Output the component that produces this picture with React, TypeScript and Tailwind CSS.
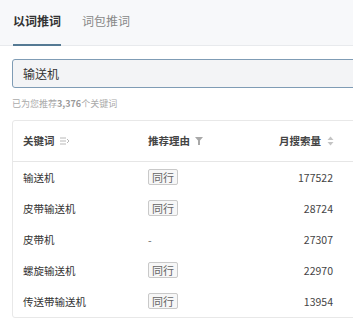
import { FC } from "react";

const rows: { word: string; reason: string | null; volume: number }[] = [
  { word: "输送机", reason: "同行", volume: 177522 },
  { word: "皮带输送机", reason: "同行", volume: 28724 },
  { word: "皮带机", reason: null, volume: 27307 },
  { word: "螺旋输送机", reason: "同行", volume: 22970 },
  { word: "传送带输送机", reason: "同行", volume: 13954 },
];

const ListIcon: FC = () => (
  <svg width="10" height="8" viewBox="0 0 10 8" className="ml-[5px]">
    <path d="M0 1h6M0 4h6M0 7h6" stroke="#b8b8b8" strokeWidth="1" fill="none" />
    <path d="M7 2l2 2-2 2" stroke="#b8b8b8" strokeWidth="1" fill="none" />
  </svg>
);

const FilterIcon: FC = () => (
  <svg width="8" height="8" viewBox="0 0 8 8" className="ml-[5px]">
    <path d="M0 0h8L5 3.5V8H3V3.5z" fill="#a8a8a8" />
  </svg>
);

const SortIcon: FC = () => (
  <svg width="7" height="10" viewBox="0 0 7 10" className="ml-[6px]">
    <path d="M3.5 0.5L6.5 4H0.5z" fill="#c4c4c4" />
    <path d="M3.5 9.5L6.5 6H0.5z" fill="#c4c4c4" />
  </svg>
);

export default function App() {
  return (
    <div
      className="w-[353px] h-[322px] overflow-hidden bg-white text-[#333]"
      style={{ fontFamily: '"Noto Sans CJK SC", "Liberation Sans", sans-serif' }}
    >
      <div className="w-[400px]">
        <div className="bg-[#f7f8fa] border-b border-[#e8eaed] flex gap-[21px] pl-[13px] h-[46px]">
          <div className="relative pt-[12px] text-[12px] font-bold text-[#333]">
            以词推词
            <div className="absolute left-0 right-0 bottom-[-1px] h-[2px] bg-[#557a94]" />
          </div>
          <div className="pt-[12px] text-[12px] text-[#888]">词包推词</div>
        </div>

        <div className="pl-[12px] pt-[13px]">
          <div className="h-[29px] border border-[#7f9cb5] rounded-[3px] bg-[#f3f4f6] flex items-center pl-[10px] text-[12px] text-[#333]">
            输送机
          </div>
          <div className="mt-[8px] h-[15px] leading-[15px] text-[9px] text-[#aaa]">
            已为您推荐<span className="font-bold text-[#999]">3,376</span>个关键词
          </div>

          <div className="mt-[9px] border border-[#e8e8e8] rounded-[3px] w-[360px]">
            <div className="h-[41px] border-b border-[#e6e6e6] flex items-center text-[10.5px] font-bold text-[#444]">
              <div className="pl-[10px] w-[135px] flex items-center">
                关键词
                <ListIcon />
              </div>
              <div className="w-[100px] flex items-center">
                推荐理由
                <FilterIcon />
              </div>
              <div className="w-[86px] flex items-center justify-end">
                月搜索量
                <SortIcon />
              </div>
            </div>
            {rows.map((r) => (
              <div key={r.word} className="h-[31px] flex items-center text-[10.5px] text-[#333]">
                <div className="pl-[10px] w-[135px]">{r.word}</div>
                <div className="w-[100px]">
                  {r.reason ? (
                    <span className="inline-block border border-[#c9c9c9] bg-[#f7f7f7] rounded-[2px] px-[3px] leading-[14px] text-[11px] text-[#666]">
                      {r.reason}
                    </span>
                  ) : (
                    <span className="text-[#666]">-</span>
                  )}
                </div>
                <div className="w-[85px] text-right text-[#444]">{r.volume}</div>
              </div>
            ))}
          </div>
        </div>
      </div>
    </div>
  );
}
